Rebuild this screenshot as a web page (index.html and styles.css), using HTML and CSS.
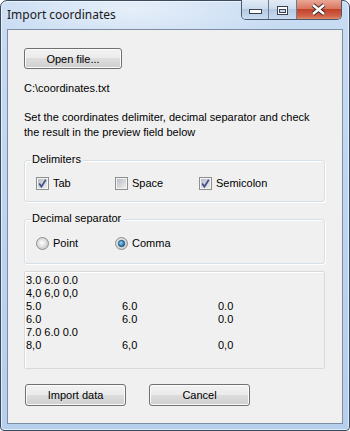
FILE: index.html
```html
<!DOCTYPE html>
<html lang="en">

<head>
    <meta charset="UTF-8">
    <title>Import coordinates</title>
    <link rel="stylesheet" href="styles.css">
</head>

<body>
    <svg class="defs" width="0" height="0">
        <defs>
            <linearGradient id="boxFill" x1="0" y1="0" x2="1" y2="1">
                <stop offset="0" stop-color="#b9bec6" />
                <stop offset="1" stop-color="#ececec" />
            </linearGradient>
            <radialGradient id="radioFill" cx="0.45" cy="0.45" r="0.6">
                <stop offset="0" stop-color="#ffffff" />
                <stop offset="1" stop-color="#c4c4c4" />
            </radialGradient>
            <radialGradient id="dotFill" cx="0.4" cy="0.4" r="0.6">
                <stop offset="0" stop-color="#8fd6fb" />
                <stop offset="1" stop-color="#15649e" />
            </radialGradient>
        </defs>
    </svg>

    <div class="window">
        <!-- Barra de titulo -->
        <div class="titlebar">
            <span class="title">Import coordinates</span>
            <div class="controls">
                <span class="ctl ctl-min">
                    <svg width="26" height="18"><rect x="7.5" y="9.5" width="12" height="4" fill="#fff" stroke="#3a4252" /></svg>
                </span>
                <span class="ctl ctl-max">
                    <svg width="27" height="18"><rect x="8.5" y="6.5" width="10" height="8" fill="#fff" stroke="#3a4252" /><rect x="10.5" y="9.5" width="6" height="3" fill="#c9d7e8" stroke="#3a4252" /></svg>
                </span>
                <span class="ctl ctl-close">
                    <svg width="44" height="18"><path d="M16 5 L27 14 M27 5 L16 14" stroke="#3b2a28" stroke-width="4.2" /><path d="M16 5 L27 14 M27 5 L16 14" stroke="#fff" stroke-width="2.4" /></svg>
                </span>
            </div>
        </div>

        <!-- Area do formulario -->
        <div class="client">
            <button class="btn btn-open">Open file...</button>
            <p class="path">C:\coordinates.txt</p>
            <p class="hint">Set the coordinates delimiter, decimal separator and check<br>the result in the preview field below</p>

            <div class="group group-delim">
                <span class="group-title">Delimiters</span>
                <div class="options">
                    <label class="opt opt-w1">
                        <svg width="13" height="13"><rect x="0.5" y="0.5" width="12" height="12" fill="#f4f4f4" stroke="#8e8f8f" /><rect x="2" y="2" width="9" height="9" fill="url(#boxFill)" /><path d="M3.2 6.4 L5.4 9.6 L9.8 2.8" stroke="#3f4f8c" stroke-width="1.7" fill="none" /></svg>
                        Tab
                    </label>
                    <label class="opt opt-w2">
                        <svg width="13" height="13"><rect x="0.5" y="0.5" width="12" height="12" fill="#f4f4f4" stroke="#8e8f8f" /><rect x="2" y="2" width="9" height="9" fill="url(#boxFill)" /></svg>
                        Space
                    </label>
                    <label class="opt">
                        <svg width="13" height="13"><rect x="0.5" y="0.5" width="12" height="12" fill="#f4f4f4" stroke="#8e8f8f" /><rect x="2" y="2" width="9" height="9" fill="url(#boxFill)" /><path d="M3.2 6.4 L5.4 9.6 L9.8 2.8" stroke="#3f4f8c" stroke-width="1.7" fill="none" /></svg>
                        Semicolon
                    </label>
                </div>
            </div>

            <div class="group group-decimal">
                <span class="group-title">Decimal separator</span>
                <div class="options">
                    <label class="opt opt-w1">
                        <svg width="13" height="13"><circle cx="6.5" cy="6.5" r="6" fill="url(#radioFill)" stroke="#8e8f8f" /></svg>
                        Point
                    </label>
                    <label class="opt">
                        <svg width="13" height="13"><circle cx="6.5" cy="6.5" r="6" fill="url(#radioFill)" stroke="#8e8f8f" /><circle cx="6.5" cy="6.5" r="3.2" fill="url(#dotFill)" stroke="#1d4a6e" stroke-width="0.8" /></svg>
                        Comma
                    </label>
                </div>
            </div>

            <div class="preview">
                <div class="row">3.0 6.0 0.0</div>
                <div class="row">4,0 6,0 0,0</div>
                <div class="row cols"><span>5.0</span><span>6.0</span><span>0.0</span></div>
                <div class="row cols"><span>6.0</span><span>6.0</span><span>0.0</span></div>
                <div class="row">7.0 6.0 0.0</div>
                <div class="row cols"><span>8,0</span><span>6,0</span><span>0,0</span></div>
            </div>

            <div class="actions">
                <button class="btn btn-action">Import data</button>
                <button class="btn btn-action">Cancel</button>
            </div>
        </div>
    </div>
</body>

</html>
```

FILE: styles.css
```css
body {
    margin: 0;
    font-family: "Liberation Sans", Arial, sans-serif;
    font-size: 11px;
    color: #000;
    background-color: #fff;
}

.defs {
    position: absolute;
}

.window {
    width: 350px;
    height: 431px;
    box-sizing: border-box;
    border: 1px solid #3a4a60;
    border-radius: 7px 7px 4px 4px;
    padding: 0 6px 6px 6px;
    background: radial-gradient(ellipse 160px 40px at 130px 8px, rgba(255, 255, 255, 0.55), rgba(255, 255, 255, 0)),
        linear-gradient(#c8dcf3, #bcd3ee 60%, #b6cfec);
    box-shadow: inset 0 0 0 1px rgba(255, 255, 255, 0.6);
    display: flex;
    flex-direction: column;
}

.titlebar {
    height: 28px;
    display: flex;
    justify-content: space-between;
    align-items: flex-start;
}

.title {
    font-family: "Noto Sans", "Open Sans", sans-serif;
    font-size: 12px;
    line-height: 16px;
    margin-top: 6px;
    color: #1a1a1a;
}

.controls {
    display: flex;
    margin-top: -1px;
    margin-right: 1px;
    border: 1px solid #4a5870;
    border-top: none;
    border-radius: 0 0 5px 5px;
    overflow: hidden;
}

.ctl {
    display: block;
    height: 19px;
}

.ctl svg {
    display: block;
}

.ctl-min,
.ctl-max {
    background: linear-gradient(#e2ebf6, #cddcee 45%, #b5c9e1 50%, #c9dcf1);
    border-right: 1px solid #6c7c94;
}

.ctl-close {
    width: 44px;
    background: linear-gradient(#eaa797, #d9775f 45%, #c4422a 50%, #d0634a 85%, #e08f6a);
}

.client {
    flex: 1;
    background-color: #f0f0f0;
    border: 1px solid #7d8da4;
    padding: 18px 17px 0 16px;
}

.btn {
    display: block;
    font-family: "Liberation Sans", Arial, sans-serif;
    font-size: 11px;
    color: #000;
    border: 1px solid #707070;
    border-radius: 3px;
    background: linear-gradient(#f2f2f2, #ebebeb 50%, #dddddd 50%, #cfcfcf);
    box-shadow: inset 0 0 0 1px #fbfbfb;
    padding: 0;
}

.btn-open {
    width: 98px;
    height: 21px;
}

.path {
    margin: 13px 0 0 0;
    line-height: 13px;
}

.hint {
    margin: 15px 0 0 0;
    line-height: 15px;
}

.group {
    border: 1px solid #d5dfe5;
    border-radius: 3px;
    box-shadow: inset 1px 1px 0 #fff, 1px 1px 0 #fff;
}

.group-title {
    display: block;
    width: fit-content;
    margin: -8px 0 0 6px;
    padding: 0 2px 0 1px;
    line-height: 13px;
    background-color: #f0f0f0;
}

.group-delim {
    margin-top: 20px;
    padding-bottom: 11px;
}

.group-decimal {
    margin-top: 17px;
    padding-bottom: 13px;
}

.options {
    display: flex;
    margin: 11px 0 0 11px;
}

.group-decimal .options {
    margin-top: 12px;
}

.opt {
    display: flex;
    align-items: center;
    gap: 4px;
    height: 13px;
    line-height: 13px;
}

.opt svg {
    display: block;
    flex: none;
}

.opt-w1 {
    width: 79px;
}

.opt-w2 {
    width: 84px;
}

.preview {
    margin-top: 7px;
    height: 98px;
    box-sizing: border-box;
    border: 1px solid #d9d9d9;
    border-radius: 2px;
    box-shadow: inset 1px 1px 0 #fff;
    padding: 2px 0 0 1px;
}

.row {
    line-height: 13px;
    height: 13px;
    white-space: pre;
}

.cols {
    display: grid;
    grid-template-columns: 96px 96px auto;
}

.actions {
    display: flex;
    gap: 23px;
    margin: 15px 0 0 1px;
}

.btn-action {
    width: 101px;
    height: 22px;
}
```
